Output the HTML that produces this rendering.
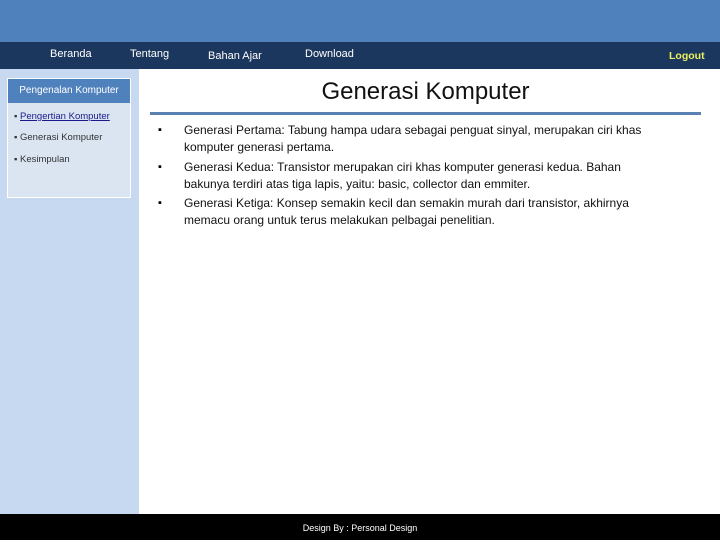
<!DOCTYPE html>
<html><head><meta charset="utf-8"><style>
*{margin:0;padding:0;box-sizing:border-box}
body{width:720px;height:540px;position:relative;overflow:hidden;background:#fff;font-family:"Liberation Sans",sans-serif}
.top{position:absolute;left:0;top:0;width:720px;height:42px;background:#4f81bd}
.nav{position:absolute;left:0;top:42px;width:720px;height:27px;background:#1c375d;color:#fff;font-size:11px}
.nav span{position:absolute;top:6px}
.side{position:absolute;left:0;top:69px;width:139px;height:445px;background:#c6d9f0}
.box{position:absolute;left:7px;top:78px;width:124px;height:120px;background:#dbe5f1;border:1px solid #fff}
.boxh{height:24px;background:#4f81bd;color:#fff;font-size:10px;text-align:center;line-height:23px}
.box div.i{position:absolute;left:6px;font-size:9.5px;color:#333}
.title{position:absolute;left:150px;width:551px;top:78px;text-align:center;font-size:24px;color:#111}
.line{position:absolute;left:150px;top:112px;width:551px;height:3px;background:#5b80b2}
.b{position:absolute;left:158px;font-size:11px}
.t{position:absolute;left:184px;width:486px;font-size:12px;line-height:16.5px;color:#111}
.foot{position:absolute;left:0;top:514px;width:720px;height:26px;background:#000;color:#fff;font-size:9px;text-align:center;line-height:28px}
</style></head><body>
<div class="top"></div>
<div class="nav">
<span style="left:50px">Beranda</span>
<span style="left:130px">Tentang</span>
<span style="left:208px;top:8px">Bahan Ajar</span>
<span style="left:305px">Download</span>
<span style="left:669px;top:8px;color:#e8f060;font-weight:bold;font-size:10.5px">Logout</span>
</div>
<div class="side"></div>
<div class="box">
<div class="boxh">Pengenalan Komputer</div>
<div class="i" style="top:32px">▪ <u style="color:#1a1a8c">Pengertian Komputer</u></div>
<div class="i" style="top:53px">▪ Generasi Komputer</div>
<div class="i" style="top:75px">▪ Kesimpulan</div>
</div>
<div class="title">Generasi Komputer</div>
<div class="line"></div>
<div class="b" style="top:124px">▪</div>
<div class="t" style="top:122px">Generasi Pertama: Tabung hampa udara sebagai penguat sinyal, merupakan ciri khas<br>komputer generasi pertama.</div>
<div class="b" style="top:161px">▪</div>
<div class="t" style="top:159px">Generasi Kedua: Transistor merupakan ciri khas komputer generasi kedua. Bahan<br>bakunya terdiri atas tiga lapis, yaitu: basic, collector dan emmiter.</div>
<div class="b" style="top:197px">▪</div>
<div class="t" style="top:195px">Generasi Ketiga: Konsep semakin kecil dan semakin murah dari transistor, akhirnya<br>memacu orang untuk terus melakukan pelbagai penelitian.</div>
<div class="foot">Design By : Personal Design</div>
</body></html>
